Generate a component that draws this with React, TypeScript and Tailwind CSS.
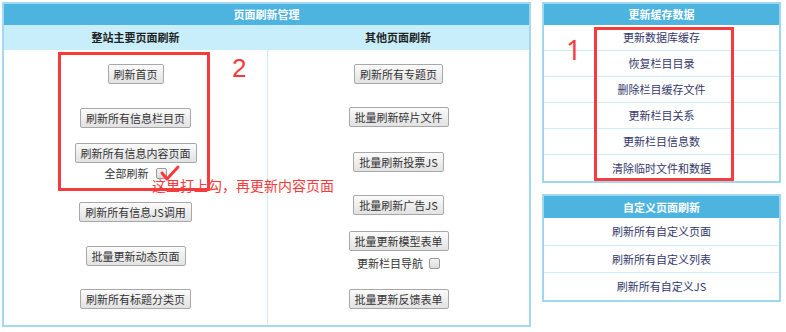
import React from "react";

const font = { fontFamily: '"Noto Sans CJK SC", "Noto Sans", sans-serif' };

function Btn({ children, className = "" }: { children: React.ReactNode; className?: string }) {
  return (
    <div
      className={`h-[20px] px-[5px] border border-[#a8a8a8] rounded-[2px] bg-gradient-to-b from-[#fbfbfb] to-[#e2e2e2] text-[11px] leading-[18px] text-[#333] whitespace-nowrap ${className}`}
    >
      {children}
    </div>
  );
}

function Check() {
  return (
    <div className="w-[11px] h-[11px] rounded-[2px] border border-[#9a9a9a] bg-gradient-to-b from-[#f4f4f4] to-[#dcdcdc]" />
  );
}

function SidePanel({
  title,
  rows,
  rowHeights,
  headerH,
  className = "",
  children,
}: {
  title: string;
  rows: string[];
  rowHeights: string[];
  headerH: string;
  className?: string;
  children?: React.ReactNode;
}) {
  return (
    <div className={`relative w-[239px] border-2 border-[#9fd6f0] flex flex-col ${className}`}>
      <div className={`${headerH} bg-[#4db3df] text-white font-bold text-[11px] flex items-center justify-center`}>
        {title}
      </div>
      {rows.map((r, i) => (
        <div
          key={r}
          className={`${rowHeights[i]} flex items-center justify-center text-[11px] text-[#34386a] ${
            i < rows.length - 1 ? "border-b border-[#cdeefa]" : ""
          }`}
        >
          {r}
        </div>
      ))}
      {children}
    </div>
  );
}

export default function App() {
  return (
    <div className="w-[786px] h-[332px] bg-white flex items-start pl-[2px] pt-[2px] gap-[11px]" style={font}>
      {/* Main panel */}
      <div className="relative w-[529px] h-[325px] border-2 border-[#a4d8f0] flex flex-col">
        <div className="h-[21px] bg-[#4db3df] text-white font-bold text-[11px] flex items-center justify-center">
          页面刷新管理
        </div>
        <div className="h-[25px] bg-[#c8eefb] grid grid-cols-[263px_1fr] text-[11px] font-bold text-[#222]">
          <div className="flex items-center justify-center">整站主要页面刷新</div>
          <div className="flex items-center justify-center">其他页面刷新</div>
        </div>
        <div className="flex-1 grid grid-cols-[263px_1fr]">
          <div className="flex flex-col items-center">
            <Btn className="mt-[14px]">刷新首页</Btn>
            <Btn className="mt-[24px]">刷新所有信息栏目页</Btn>
            <Btn className="mt-[15px]">刷新所有信息内容页面</Btn>
            <div className="mt-[2px] h-[16px] flex items-center gap-[7px] text-[11px] text-[#333]">
              <span>全部刷新</span>
              <Check />
            </div>
            <Btn className="mt-[21px]">刷新所有信息JS调用</Btn>
            <Btn className="mt-[24px]">批量更新动态页面</Btn>
            <Btn className="mt-[23px]">刷新所有标题分类页</Btn>
          </div>
          <div className="border-l border-[#c8eefb] flex flex-col items-center">
            <Btn className="mt-[14px]">刷新所有专题页</Btn>
            <Btn className="mt-[23px]">批量刷新碎片文件</Btn>
            <Btn className="mt-[25px]">批量刷新投票JS</Btn>
            <Btn className="mt-[23px]">批量刷新广告JS</Btn>
            <Btn className="mt-[16px]">批量更新模型表单</Btn>
            <div className="mt-[4px] h-[16px] flex items-center gap-[6px] text-[11px] text-[#333]">
              <span>更新栏目导航</span>
              <Check />
            </div>
            <Btn className="mt-[18px]">批量更新反馈表单</Btn>
          </div>
        </div>

        {/* annotations */}
        <div className="absolute left-[54px] top-[48px] w-[152px] h-[139px] border-[3px] border-[#f53b3b]" />
        <div
          className="absolute left-[228px] top-[51px] text-[26px] leading-[26px] text-[#f53b3b]"
          style={{ fontFamily: '"Liberation Sans", Arial, sans-serif' }}
        >
          2
        </div>
        <svg className="absolute left-[155px] top-[160px]" width="24" height="20" viewBox="0 0 24 20">
          <path d="M3 9 L8 15 L19 3" fill="none" stroke="#f53b3b" strokeWidth="3" strokeLinecap="round" strokeLinejoin="round" />
        </svg>
        <div className="absolute left-[148px] top-[173px] text-[14px] leading-[16px] text-[#f53b3b] whitespace-nowrap">
          这里打上勾，再更新内容页面
        </div>
      </div>

      {/* Right column */}
      <div className="flex flex-col">
        <SidePanel
          title="更新缓存数据"
          headerH="h-[21px]"
          rows={["更新数据库缓存", "恢复栏目目录", "删除栏目缓存文件", "更新栏目关系", "更新栏目信息数", "清除临时文件和数据"]}
          rowHeights={["h-[26px]", "h-[26px]", "h-[26px]", "h-[26px]", "h-[26px]", "h-[26px]"]}
        >
          <div className="absolute left-[50px] top-[23px] w-[140px] h-[154px] border-[3px] border-[#f53b3b]" />
          <div
            className="absolute left-[22px] top-[32px] text-[27px] leading-[27px] text-[#f53b3b]"
            style={{ fontFamily: '"Noto Sans", sans-serif' }}
          >
            1
          </div>
        </SidePanel>
        <SidePanel
          className="mt-[11px]"
          title="自定义页面刷新"
          headerH="h-[22px]"
          rows={["刷新所有自定义页面", "刷新所有自定义列表", "刷新所有自定义JS"]}
          rowHeights={["h-[28px]", "h-[27px]", "h-[27px]"]}
        />
      </div>
    </div>
  );
}
